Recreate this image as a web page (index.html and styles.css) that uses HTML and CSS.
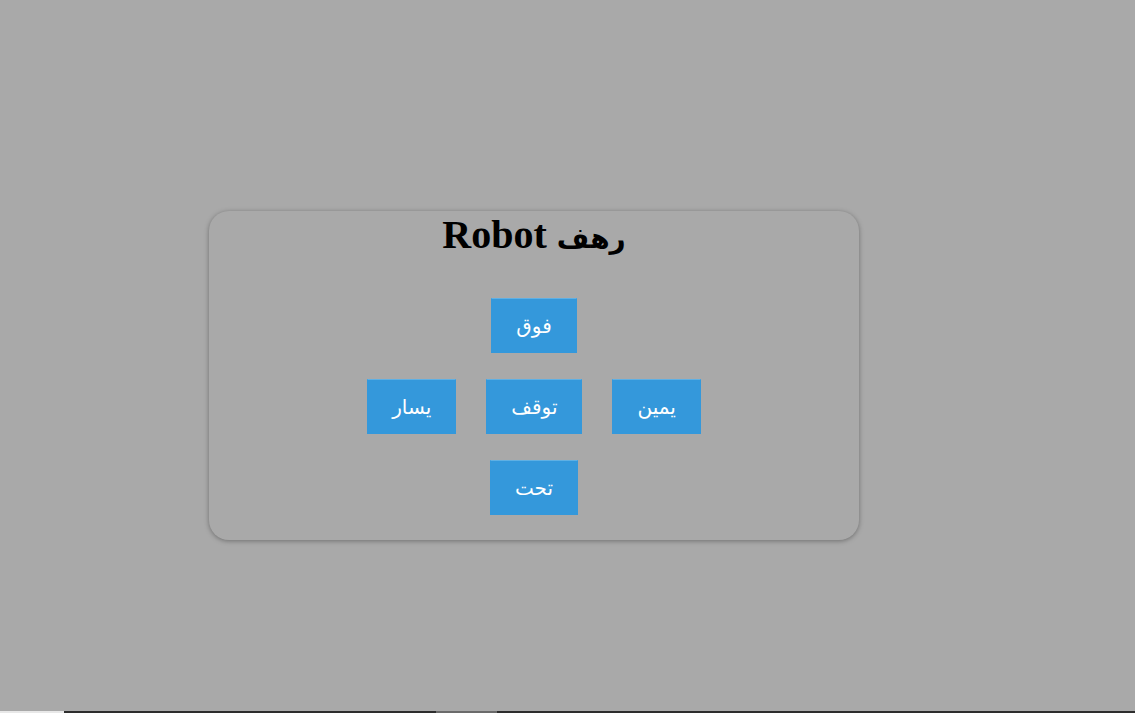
FILE: index.html
```html
<!DOCTYPE html>
<html lang="ar">
<head>
<meta charset="utf-8">
<title>Robot</title>
<link rel="stylesheet" href="styles.css">
</head>
<body>
<main class="stage">
  <section class="card">
    <h1 class="title">Robot <span class="title-ar">رهف</span></h1>
    <div class="controls">
      <div class="row"><button class="btn">فوق</button></div>
      <div class="row">
        <button class="btn">يسار</button>
        <button class="btn">توقف</button>
        <button class="btn">يمين</button>
      </div>
      <div class="row"><button class="btn">تحت</button></div>
    </div>
  </section>
</main>
<div class="strip">
  <span class="seg seg-light"></span>
  <span class="seg seg-dark seg-a"></span>
  <span class="seg seg-mid"></span>
  <span class="seg seg-dark seg-b"></span>
</div>
</body>
</html>
```
FILE: styles.css
```css
html, body {
  margin: 0;
  height: 100%;
}
body {
  background: #a9a9a9;
  display: flex;
  flex-direction: column;
  font-family: "Liberation Serif", "DejaVu Serif", serif;
}
.stage {
  flex: 1;
  padding: 211px 0 0 209px;
}
.card {
  width: 650px;
  height: 329px;
  box-sizing: border-box;
  border-radius: 20px;
  box-shadow: 0 1px 5px rgba(0, 0, 0, 0.35);
  padding: 2px 0 0;
  display: flex;
  flex-direction: column;
  align-items: center;
}
.title {
  margin: 0;
  font-size: 40px;
  font-weight: bold;
  color: #000;
  font-family: "Liberation Serif", "DejaVu Sans", serif;
  line-height: 44px;
}
.title-ar {
  font-family: "DejaVu Sans", sans-serif;
  font-size: 28px;
}
.controls {
  margin-top: 37px;
  display: flex;
  flex-direction: column;
  gap: 26px;
  align-items: center;
}
.row {
  display: flex;
  gap: 30px;
  justify-content: center;
}
.btn {
  height: 55px;
  padding: 0 24px;
  background: #3498db;
  color: #fff;
  border: 1px solid #3498db;
  border-top-color: #5fb0e4;
  font-family: "Liberation Sans", "DejaVu Sans", sans-serif;
  font-size: 20px;
  cursor: pointer;
}
.strip {
  height: 2px;
  display: flex;
}
.seg { display: block; height: 2px; }
.seg-light { width: 64px; background: #e8e8e8; }
.seg-a { width: 372px; }
.seg-dark { background: #2d2d2d; }
.seg-mid { width: 61px; background: #6b6b6b; }
.seg-b { flex: 1; }
```
